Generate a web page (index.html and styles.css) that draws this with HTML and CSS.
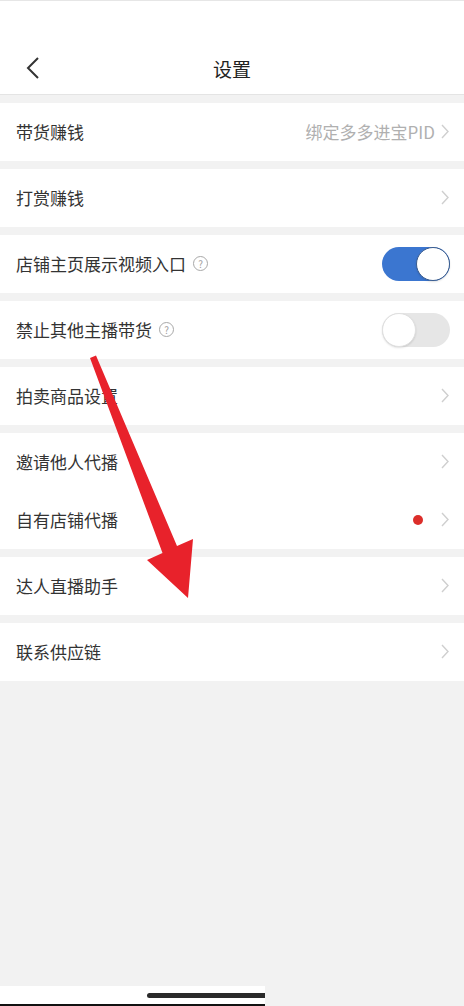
FILE: index.html
```html
<!DOCTYPE html>
<html lang="zh-CN">
<head>
  <meta charset="UTF-8" />
  <title>设置</title>
  <link rel="stylesheet" href="styles.css">
</head>
<body>
  <div class="screen">
    <header class="topbar">
      <div class="navbar">
        <span class="back">
          <svg width="14" height="24" viewBox="0 0 14 24"><polyline points="12,2 2,12 12,22" fill="none" stroke="#333" stroke-width="2" stroke-linejoin="miter"/></svg>
        </span>
        <h1>设置</h1>
      </div>
    </header>

    <main class="settings">
      <section class="group">
        <div class="row">
          <span class="label">带货赚钱</span>
          <span class="value">绑定多多进宝PID</span>
          <span class="arrow"><svg width="8" height="15" viewBox="0 0 8 15"><polyline points="1,1 7,7.5 1,14" fill="none" stroke="#cfcfcf" stroke-width="1.4"/></svg></span>
        </div>
      </section>
      <section class="group">
        <div class="row">
          <span class="label">打赏赚钱</span>
          <span class="arrow"><svg width="8" height="15" viewBox="0 0 8 15"><polyline points="1,1 7,7.5 1,14" fill="none" stroke="#cfcfcf" stroke-width="1.4"/></svg></span>
        </div>
      </section>
      <section class="group">
        <div class="row">
          <span class="label">店铺主页展示视频入口<i class="help">?</i></span>
          <span class="switch on"><span class="knob"></span></span>
        </div>
      </section>
      <section class="group">
        <div class="row">
          <span class="label">禁止其他主播带货<i class="help">?</i></span>
          <span class="switch"><span class="knob"></span></span>
        </div>
      </section>
      <section class="group">
        <div class="row">
          <span class="label">拍卖商品设置</span>
          <span class="arrow"><svg width="8" height="15" viewBox="0 0 8 15"><polyline points="1,1 7,7.5 1,14" fill="none" stroke="#cfcfcf" stroke-width="1.4"/></svg></span>
        </div>
      </section>
      <section class="group">
        <div class="row">
          <span class="label">邀请他人代播</span>
          <span class="arrow"><svg width="8" height="15" viewBox="0 0 8 15"><polyline points="1,1 7,7.5 1,14" fill="none" stroke="#cfcfcf" stroke-width="1.4"/></svg></span>
        </div>
        <div class="row">
          <span class="label">自有店铺代播</span>
          <span class="dot"></span>
          <span class="arrow"><svg width="8" height="15" viewBox="0 0 8 15"><polyline points="1,1 7,7.5 1,14" fill="none" stroke="#cfcfcf" stroke-width="1.4"/></svg></span>
        </div>
      </section>
      <section class="group">
        <div class="row">
          <span class="label">达人直播助手</span>
          <span class="arrow"><svg width="8" height="15" viewBox="0 0 8 15"><polyline points="1,1 7,7.5 1,14" fill="none" stroke="#cfcfcf" stroke-width="1.4"/></svg></span>
        </div>
      </section>
      <section class="group">
        <div class="row">
          <span class="label">联系供应链</span>
          <span class="arrow"><svg width="8" height="15" viewBox="0 0 8 15"><polyline points="1,1 7,7.5 1,14" fill="none" stroke="#cfcfcf" stroke-width="1.4"/></svg></span>
        </div>
      </section>
    </main>

    <footer class="homebar">
      <div class="home-strip"><span class="indicator"></span></div>
    </footer>

    <!-- red pointer drawn over the list -->
    <svg class="pointer" width="464" height="1006" viewBox="0 0 464 1006">
      <polygon points="90,358 96,355.5 177,546 193,539 188,598 147,560 162.5,553" fill="#e8222b"/>
    </svg>
  </div>
</body>
</html>
```

FILE: styles.css
```css
* { box-sizing: border-box; margin: 0; padding: 0; }
html, body { height: 100%; }
body {
  font-family: "Noto Sans CJK SC", "Noto Sans", sans-serif;
  background: #f2f2f2;
  color: #333;
}
.screen {
  position: relative;
  height: 1006px;
  display: flex;
  flex-direction: column;
  overflow: hidden;
}
.topbar {
  height: 95px;
  background: #fff;
  border-top: 1px solid #e6e6e6;
  border-bottom: 1px solid #e4e4e4;
  display: flex;
  align-items: flex-end;
}
.navbar {
  position: relative;
  width: 100%;
  height: 50px;
  padding-bottom: 2px;
  display: flex;
  align-items: center;
  justify-content: center;
}
.navbar h1 {
  font-size: 19px;
  font-weight: 400;
  color: #222;
}
.back {
  position: absolute;
  left: 26px;
  top: 12px;
  display: flex;
}
.settings {
  flex: 1;
  padding-top: 8px;
}
.group {
  background: #fff;
  margin-bottom: 8px;
}
.row {
  height: 58px;
  display: flex;
  align-items: center;
  padding: 0 15px 1px 16px;
}
.label {
  flex: 1;
  display: flex;
  align-items: center;
  font-size: 17px;
  color: #333;
}
.help {
  width: 15px;
  height: 15px;
  margin-left: 7px;
  border: 1px solid #a8a8a8;
  border-radius: 50%;
  font-style: normal;
  font-size: 10px;
  line-height: 13px;
  text-align: center;
  color: #a0a0a0;
}
.value {
  font-size: 17px;
  color: #b0b0b0;
  margin-right: 6px;
}
.arrow { display: flex; }
.dot {
  width: 10px;
  height: 10px;
  border-radius: 50%;
  background: #dc2e2a;
  margin-right: 18px;
}
.switch {
  position: relative;
  width: 68px;
  height: 34px;
  margin-right: -1px;
  border-radius: 17px;
  background: #e6e6e6;
}
.switch .knob {
  position: absolute;
  top: 0;
  left: 0;
  width: 34px;
  height: 34px;
  border-radius: 50%;
  background: #fff;
  border: 1px solid #e0e0e0;
  box-shadow: 0 1px 2px rgba(0,0,0,0.12);
}
.switch.on { background: #3b76d0; }
.switch.on .knob {
  left: auto;
  right: 0;
  border-color: #3a5c8e;
}
.homebar {
  height: 20px;
  display: flex;
}
.home-strip {
  width: 265px;
  background: #fff;
  border-bottom: 2px solid #111;
  display: flex;
  justify-content: flex-end;
  padding-top: 7px;
}
.indicator {
  width: 118px;
  height: 5px;
  background: #2a2a2a;
  border-radius: 3px 0 0 3px;
}
.pointer {
  position: absolute;
  left: 0;
  top: 0;
  pointer-events: none;
}
```
